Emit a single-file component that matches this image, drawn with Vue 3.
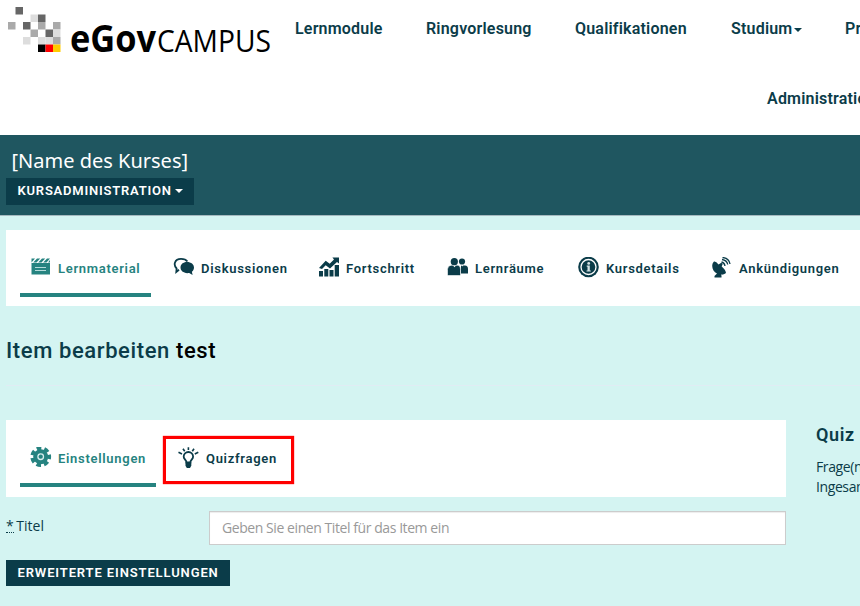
<script setup>
const navItems = [
  { label: 'Lernmodule', cls: 'n1' },
  { label: 'Ringvorlesung', cls: 'n2' },
  { label: 'Qualifikationen', cls: 'n3' },
  { label: 'Studium', cls: 'n4', caret: true },
  { label: 'Projekte', cls: 'n5' },
]

const tabs = [
  { label: 'Lernmaterial', icon: 'clapper', active: true },
  { label: 'Diskussionen', icon: 'chat' },
  { label: 'Fortschritt', icon: 'chart' },
  { label: 'Lernräume', icon: 'people' },
  { label: 'Kursdetails', icon: 'info' },
  { label: 'Ankündigungen', icon: 'dish' },
]

const pixels = [
  [7.5, 0, '#666'], [22.5, 7.5, '#ddd'], [30, 7.5, '#666'],
  [0, 15, '#aaa'], [15, 15, '#666'], [30, 15, '#aaa'], [45, 15, '#aaa'],
  [22.5, 22.5, '#aaa'], [37.5, 22.5, '#666'], [45, 22.5, '#ddd'],
  [15, 30, '#ddd'], [30, 30, '#ddd'], [37.5, 30, '#ddd'], [45, 30, '#aaa'],
  [30, 37.5, '#000'], [37.5, 37.5, '#f00'], [45, 37.5, '#fc0'],
]
</script>

<template>
  <div class="page">
    <header class="header">
      <svg class="logo" width="270" height="60" viewBox="0 0 270 60">
        <rect v-for="(p, i) in pixels" :key="i" :x="8 + p[0]" :y="7 + p[1]" width="7.5" height="7.5" :fill="p[2]" />
        <text class="logo-bold" x="70" y="52" textLength="86" lengthAdjust="spacingAndGlyphs">eGov</text>
        <text class="logo-thin" x="157" y="52" textLength="114" lengthAdjust="spacingAndGlyphs">CAMPUS</text>
      </svg>
      <nav class="nav">
        <a v-for="n in navItems" :key="n.label" :class="n.cls">{{ n.label }}<i v-if="n.caret" class="caret"></i></a>
        <a class="admin">Administration</a>
      </nav>
    </header>

    <section class="course">
      <div class="course-name">[Name des Kurses]</div>
      <button class="btn course-btn"><span>KURSADMINISTRATION</span><i class="caret"></i></button>
    </section>

    <main class="main">
      <div class="tabs course-tabs">
        <a v-for="t in tabs" :key="t.label" class="tab" :class="[t.icon, { active: t.active }]">
          <svg class="icon" width="22" height="22" viewBox="0 0 22 22">
            <g v-if="t.icon === 'clapper'">
              <path fill="currentColor" d="M1.500 6H20v11.500H1.500zM1.500 1.500 5 1.500 1.500 5.500zM7 1.500h3.200L6.500 5.500H3.200zM12 1.500h3.200L11.500 5.500H8.200zM17 1.500h3L16.500 5.500H13.200zM20 3v2.500h-2z" />
              <path stroke="#b5dbda" stroke-width="1" d="M5 10.500h11M5 13.500h11" />
            </g>
            <g v-else-if="t.icon === 'chat'">
              <path fill="none" stroke="currentColor" stroke-width="1.800" d="M6 12.800 3.300 15l.3-3.500C.200 8 1.300 2 8 1.900c3.500 0 5.400 1.200 6.400 2.700" />
              <path fill="currentColor" d="M14 5c4.200 0 7 2.400 7 5.600 0 1.900-.9 3.300-2.100 4.200l.7 3.200-3.400-2c-5.200.8-8.700-1.900-8.700-5.400C7.500 7.400 10 5 14 5z" />
            </g>
            <g v-else-if="t.icon === 'chart'" fill="currentColor">
              <path d="M1 14h4v5.500H1zM6.300 12h4v7.500h-4zM11.500 13h4v6.500h-4zM16.700 8H21v11.500h-4.300z" />
              <path d="m1 11 6.700-7.300 4 3L16 2.500 14.400.500H21V6.500l-2-1.500-7 6.500-4.300-3.300L4 12z" />
            </g>
            <g v-else-if="t.icon === 'people'" fill="currentColor">
              <circle cx="15" cy="4.500" r="3.100" />
              <path d="M14 8.500h4c2 0 3 1.500 3 3.500v4.500h-7z" />
              <path stroke="#fff" stroke-width=".6" d="M4.500 8.300h6c2 0 3 2 3 4V17.500q0 1-1 1h-11Q.500 18.500 .500 17.500v-5c0-2 1.500-4.200 4-4.200z" />
              <circle cx="7.300" cy="4.700" r="3.600" />
              <path fill="#fff" d="m6 8.500 1.500 1.800L9 8.500zM14.200 8h2l-1 1.500z" />
            </g>
            <g v-else-if="t.icon === 'info'">
              <circle cx="10.500" cy="10" r="10.300" fill="currentColor" />
              <circle cx="10.500" cy="10" r="7.500" fill="none" stroke="#fff" stroke-width="1.300" />
              <circle cx="10.700" cy="6.400" r="1.400" fill="#d4e3e5" />
              <path fill="#d4e3e5" d="M8.700 8.600h3.100v4.800h1v1.200H8.500v-1.200h1v-3.600h-.8z" />
            </g>
            <g v-else>
              <path fill="currentColor" d="M3 4.500Q5 4 7.500 7.500l2.800-1.700 1.400 1.200-1 2.600q4 3.500 4.300 6.400c-2 1.500-3.500 1.900-5 1.600l.5 1.200v1.700H3.500v-1.500l2.500-2.500C1.500 14.500-.5 8 3 4.500z" />
              <path fill="none" stroke="currentColor" stroke-width="1.300" d="M10.500 5q3 .7 3.500 4M11 2.500q5 .7 5.700 5M11.500.500q6.500.500 7.500 6.500" />
            </g>
          </svg>
          <span>{{ t.label }}</span>
        </a>
      </div>

      <h1 class="title">Item bearbeiten <b>test</b></h1>

      <div class="columns">
        <div class="form">
          <div class="tabs item-tabs">
            <a class="tab settings active">
              <svg class="icon" width="22" height="22" viewBox="0 0 22 22">
                <circle cx="10.700" cy="9.700" r="7.500" fill="currentColor" />
                <circle cx="10.700" cy="9.700" r="8.500" fill="none" stroke="currentColor" stroke-width="3.800" stroke-dasharray="4.600 3.030" stroke-dashoffset="2.300" />
                <circle cx="10.700" cy="9.700" r="2.800" fill="none" stroke="#d8eeee" stroke-width="1.300" />
              </svg>
              <span>Einstellungen</span>
            </a>
            <a class="tab questions">
              <svg class="icon" width="22" height="22" viewBox="0 0 22 22">
                <path fill="none" stroke="currentColor" stroke-width="1.800" d="M8.500 15.500c0-2.500-2.800-3.200-2.800-5.800a4.700 4.700 0 0 1 9.400 0C15.100 12.300 12.300 13 12.300 15.500z" />
                <path fill="currentColor" d="M7.500 15h5.800v3.800L12 21H8.800l-1.300-2.200z" />
                <path stroke="currentColor" stroke-width="1.600" d="M10.400.200v2.900M5 1.700l1.700 2.600M16 1.700l-1.700 2.600M.500 5.300 4 7M20.300 5.300 16.800 7" />
              </svg>
              <span>Quizfragen</span>
            </a>
          </div>
          <div class="field">
            <label><abbr>*</abbr> Titel</label>
            <input type="text" placeholder="Geben Sie einen Titel für das Item ein" />
          </div>
          <button class="btn more-btn"><span>ERWEITERTE EINSTELLUNGEN</span></button>
        </div>
        <aside class="aside">
          <h2>Quiz info</h2>
          <p>Frage(n): 0</p>
          <p>Ingesamt: 0</p>
        </aside>
      </div>
    </main>
  </div>
</template>

<style>
body { margin: 0; overflow: hidden; }
</style>

<style scoped>
* { box-sizing: border-box; }
.page {
  width: 860px; height: 606px; overflow: hidden;
  background: #d4f4f2; color: #0b3c49;
  font-family: Roboto, sans-serif;
}
.header { display: flex; height: 135px; background: #fff; overflow: hidden; }
.logo { flex: none; width: 270px; margin-right: 25px; overflow: visible; }
.logo-bold { font: 700 37px "Open Sans", sans-serif; }
.logo-thin { font: 400 30.5px "Open Sans", sans-serif; }
.nav {
  flex: none; display: grid; width: 700px;
  grid-template-columns: 131px 149px 156px 114px 1fr;
  grid-template-rows: 70px 60px;
  font-size: 16px; font-weight: 600; line-height: 20px; padding-top: 19px;
  white-space: nowrap;
}
.nav a { letter-spacing: .2px; }
.admin { grid-column: 1 / -1; padding-left: 472px; }
.caret {
  display: inline-block; margin-left: 3px; vertical-align: 2px;
  border: 4px solid transparent; border-top-color: currentColor; border-bottom: 0;
}
.nav .caret { margin-left: 2px; }
.course {
  height: 81px; padding: 13px 6px 0; background: #1f5660; border-bottom: 1px solid #a5b9bf;
}
.course-name {
  padding-left: 5.500px; height: 30px; line-height: 25px;
  font-family: "Noto Sans", sans-serif; font-size: 20px; color: #fff;
}
.btn {
  display: flex; align-items: center; border: 0; margin: 0; padding: 0 11.500px 2px; background: #0b3c49; color: #fff;
  font: 600 13px Roboto, sans-serif; letter-spacing: .78px; white-space: nowrap;
}
.course-btn { width: 188px; height: 27px; }
.main { padding: 14px 0 0 6px; }
.tabs { display: flex; background: #fff; padding: 14px 14px 0; }
.course-tabs {
  display: grid; width: 1100px; height: 76px;
  grid-template-columns: 143px 145px 129px 131px 133px 150px;
}
.tab {
  display: flex; align-items: center; justify-self: start; height: 53px; padding: 0 10px 4px;
  font-size: 13px; font-weight: 600; line-height: 20px; letter-spacing: .7px; white-space: nowrap;
}
.tab .icon { flex: none; margin-right: 6px; position: relative; top: -1px; }
.active { color: #268380; border-bottom: 4px solid #268380; padding-bottom: 0; }
.clapper { width: 131px; }
.title { margin: 0; padding-top: 31px; height: 80px; border-bottom: 1px solid #e0ecf4; font-size: 22px; font-weight: 500; line-height: 28px; letter-spacing: .6px; }
.title b { font-weight: 500; color: #000; }
.columns { display: flex; padding-top: 34px; }
.form { width: 780px; }
.item-tabs { height: 77px; }
.settings { width: 136px; }
.questions { width: 131px; height: 48px; margin: 2px 0 0 7px; padding: 0 0 2px 12px; border: 3px solid #f00; box-shadow: 0 0 1px #f00; }
.field { display: flex; margin-top: 14px; height: 34px; font-family: "Open Sans", sans-serif; font-size: 14px; }
label { width: 203px; line-height: 30px; }
abbr { border-bottom: 1px dotted currentColor; display: inline-block; height: 22px; line-height: 30px; margin-right: -1px; }
input {
  width: 577px; height: 34px; padding: 0 12px 2px; border: 1px solid #ccc; background: #fff;
  font: 14px "Open Sans", sans-serif; letter-spacing: -.43px; box-shadow: inset 0 1px 1px rgba(0, 0, 0, .075);
}
input::placeholder { color: #999; opacity: 1; }
.more-btn { width: 224px; height: 26px; margin-top: 15px; letter-spacing: .88px; }
.aside { flex: none; width: 300px; padding-left: 30px; white-space: nowrap; }
.aside h2 { margin: 4px 0 11px; font-size: 18px; font-weight: 600; line-height: 22px; letter-spacing: .6px; }
.aside p { margin: 0; font: 14px/20px "Open Sans", sans-serif; letter-spacing: -.4px; }
</style>
